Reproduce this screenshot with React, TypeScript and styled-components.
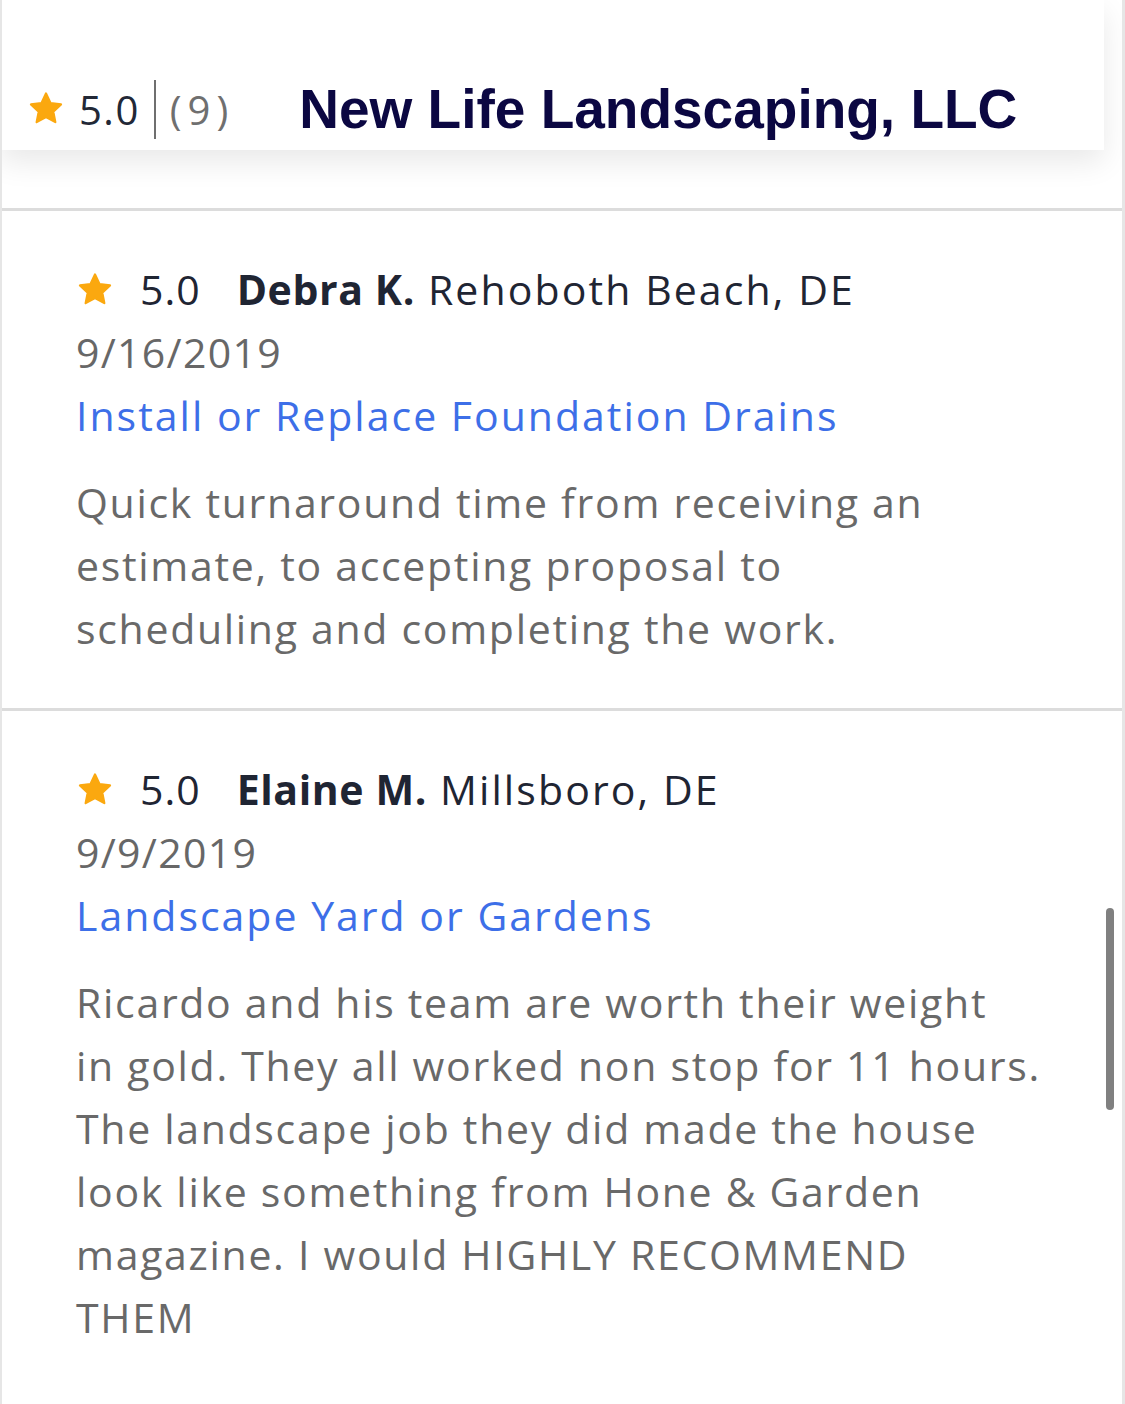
import styled, { createGlobalStyle } from "styled-components";

const GlobalStyle = createGlobalStyle`
  html, body {
    margin: 0;
    padding: 0;
    background: #ffffff;
  }
  body {
    font-family: "Open Sans", "Noto Sans", sans-serif;
  }
`;

const StyledPage = styled.div`
  position: relative;
  width: 1125px;
  min-height: 1404px;
  box-sizing: border-box;
  border-left: 2px solid #e6e6e6;
  border-right: 3px solid #e6e6e6;
  overflow: hidden;
`;

const StyledHeader = styled.div`
  position: relative;
  z-index: 2;
  margin-left: -2px;
  width: 1104px;
  height: 150px;
  box-sizing: border-box;
  padding: 68px 0 0 27px;
  display: flex;
  align-items: center;
  background: #ffffff;
  box-shadow: 0 12px 28px rgba(0, 0, 0, 0.09);
`;

const StyledHeaderRating = styled.div`
  display: flex;
  align-items: center;
  font-size: 40px;
  color: #222836;
`;

const StyledHeaderScore = styled.span`
  margin-left: 14px;
  letter-spacing: 1.5px;
`;

const StyledHeaderDivider = styled.span`
  width: 2px;
  height: 59px;
  margin: 0 14px 0 14px;
  background: #6f6f6f;
`;

const StyledHeaderCount = styled.span`
  color: #6f6f6f;
  letter-spacing: 6px;
`;

const StyledTitle = styled.h1`
  margin: 0 0 0 65px;
  font-family: "Liberation Sans", Arial, sans-serif;
  font-size: 55px;
  font-weight: 700;
  color: #0b0742;
`;

const StyledSpacer = styled.div`
  height: 58px;
`;

const StyledReview = styled.div`
  border-top: 3px solid #dcdcdc;
  padding: 47px 40px 48px 74px;
  font-size: 41px;
  line-height: 63px;
  letter-spacing: 1.7px;

  &:last-child {
    border-bottom: 3px solid #dcdcdc;
  }
`;

const StyledReviewHead = styled.div`
  display: flex;
  align-items: center;
  color: #1f2533;
  white-space: nowrap;
`;

const StyledScore = styled.span`
  margin: 0 36px 0 26px;
  letter-spacing: 1px;
`;

const StyledName = styled.span`
  font-weight: 700;
  margin-right: 13px;
  letter-spacing: 0.6px;
`;

const StyledPlace = styled.span`
  letter-spacing: 2.1px;
`;

const StyledDate = styled.div`
  color: #676767;
  letter-spacing: 1.3px;
`;

const StyledService = styled.a`
  display: block;
  color: #3d6fe8;
  text-decoration: none;
  letter-spacing: 2px;
`;

const StyledBody = styled.p`
  margin: 24px 0 0;
  color: #696969;
`;

const StyledLine = styled.span`
  display: block;
  white-space: nowrap;
`;

const StyledScrollbar = styled.div`
  position: absolute;
  right: 8px;
  top: 908px;
  width: 8px;
  height: 202px;
  border-radius: 4px;
  background: #808080;
`;

const Star = ({ size }: { size: number }) => (
  <svg width={size} height={size} viewBox="0 0 24 24">
    <path
      d="M12 2.2l2.9 6.1 6.6.8-4.9 4.6 1.3 6.6L12 17l-5.9 3.3 1.3-6.6-4.9-4.6 6.6-.8z"
      fill="#fba80f"
      stroke="#fba80f"
      strokeWidth="1.4"
      strokeLinejoin="round"
    />
  </svg>
);

const reviews = [
  {
    name: "Debra K.",
    place: "Rehoboth Beach, DE",
    date: "9/16/2019",
    service: "Install or Replace Foundation Drains",
    lines: [
      "Quick turnaround time from receiving an",
      "estimate, to accepting proposal to",
      "scheduling and completing the work.",
    ],
  },
  {
    name: "Elaine M.",
    place: "Millsboro, DE",
    date: "9/9/2019",
    service: "Landscape Yard or Gardens",
    lines: [
      "Ricardo and his team are worth their weight",
      "in gold. They all worked non stop for 11 hours.",
      "The landscape job they did made the house",
      "look like something from Hone & Garden",
      "magazine. I would HIGHLY RECOMMEND",
      "THEM",
    ],
  },
];

const App = () => {
  return (
    <>
      <GlobalStyle />
      <StyledPage>
        <StyledHeader>
          <StyledHeaderRating>
            <Star size={38} />
            <StyledHeaderScore>5.0</StyledHeaderScore>
            <StyledHeaderDivider />
            <StyledHeaderCount>(9)</StyledHeaderCount>
          </StyledHeaderRating>
          <StyledTitle>New Life Landscaping, LLC</StyledTitle>
        </StyledHeader>
        <StyledSpacer />
        {reviews.map((review) => (
          <StyledReview key={review.name}>
            <StyledReviewHead>
              <Star size={38} />
              <StyledScore>5.0</StyledScore>
              <StyledName>{review.name}</StyledName>
              <StyledPlace>{review.place}</StyledPlace>
            </StyledReviewHead>
            <StyledDate>{review.date}</StyledDate>
            <StyledService href="#">{review.service}</StyledService>
            <StyledBody>
              {review.lines.map((line) => (
                <StyledLine key={line}>{line}</StyledLine>
              ))}
            </StyledBody>
          </StyledReview>
        ))}
        <StyledScrollbar />
      </StyledPage>
    </>
  );
};

export default App;
